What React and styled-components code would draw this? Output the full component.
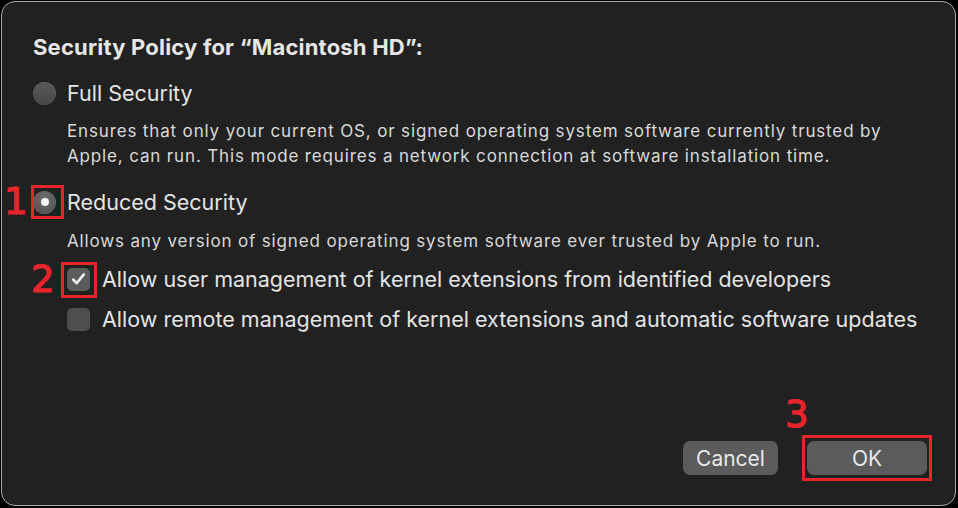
import styled, { createGlobalStyle } from "styled-components";

const Global = createGlobalStyle`
  html, body {
    margin: 0;
    padding: 0;
    background: #000;
  }
  body {
    font-family: "Inter", "Liberation Sans", sans-serif;
    -webkit-font-smoothing: antialiased;
  }
`;

const RED = "#e8242c";

const Dialog = () => {
  return (
    <Window>
      <Title>Security Policy for “Macintosh HD”:</Title>

      <Option $top={18}>
        <Radio />
        <Label>Full Security</Label>
      </Option>
      <Description>
        Ensures that only your current OS, or signed operating system software currently trusted by
        <br />
        Apple, can run. This mode requires a network connection at software installation time.
      </Description>

      <Option $top={20}>
        <Marked>
          <Radio $checked />
          <RadioBox />
          <StepNumber $left={-29} $top={-19}>1</StepNumber>
        </Marked>
        <Label>Reduced Security</Label>
      </Option>
      <Description $top={14}>
        Allows any version of signed operating system software ever trusted by Apple to run.
      </Description>

      <CheckRow $top={12}>
        <Marked>
          <Checkbox $checked>
            <svg width="15" height="14" viewBox="0 0 15 14">
              <path
                d="M2.2 7.6 L5.6 11.2 L12.8 2.4"
                fill="none"
                stroke="#f2f2f2"
                strokeWidth="2.6"
                strokeLinecap="round"
                strokeLinejoin="round"
              />
            </svg>
          </Checkbox>
          <CheckBoxMark />
          <StepNumber $left={-36} $top={-18}>2</StepNumber>
        </Marked>
        <Label>Allow user management of kernel extensions from identified developers</Label>
      </CheckRow>

      <CheckRow $top={14}>
        <Checkbox />
        <Label>Allow remote management of kernel extensions and automatic software updates</Label>
      </CheckRow>

      <Footer>
        <Button>Cancel</Button>
        <Marked>
          <Button $wide>OK</Button>
          <ButtonBox />
          <StepNumber $left={-22} $top={-56}>3</StepNumber>
        </Marked>
      </Footer>
    </Window>
  );
};

const App = () => (
  <>
    <Global />
    <Dialog />
  </>
);

const Window = styled.div`
  box-sizing: border-box;
  margin: 1px 0 0 1px;
  width: 955px;
  height: 505px;
  border: 1px solid #a9a9a9;
  border-radius: 14px;
  background: #212121;
  padding: 30px 30px 0 31px;
  display: flex;
  flex-direction: column;
  color: #e4e4e4;
`;

const Title = styled.div`
  font-size: 22px;
  font-weight: 700;
  letter-spacing: 0.2px;
  line-height: 30px;
  color: #e6e6e6;
  white-space: nowrap;
`;

const Option = styled.div`
  display: flex;
  align-items: center;
  gap: 11px;
  margin-top: ${(p) => p.$top}px;
  height: 26px;
`;

const CheckRow = styled.div`
  display: flex;
  align-items: center;
  gap: 12px;
  margin-top: ${(p) => p.$top}px;
  margin-left: 34px;
  height: 26px;
`;

const Label = styled.span`
  font-size: 21.5px;
  line-height: 26px;
  color: #e4e4e4;
  white-space: nowrap;
`;

const Description = styled.div`
  margin: ${(p) => p.$top ?? 13}px 0 0 34px;
  font-size: 17px;
  letter-spacing: 0.85px;
  line-height: 25px;
  color: #d9d9d9;
  white-space: nowrap;
`;

const Marked = styled.div`
  position: relative;
  display: flex;
`;

const Radio = styled.div`
  position: relative;
  width: 23px;
  height: 23px;
  border-radius: 50%;
  background: ${(p) =>
    p.$checked
      ? "radial-gradient(circle at 50% 35%, #6e6e6e, #4c4c4c)"
      : "linear-gradient(#5a5a5a, #474747)"};
  box-shadow: inset 0 0 0 0.5px rgba(255, 255, 255, 0.08);

  &::after {
    content: "";
    display: ${(p) => (p.$checked ? "block" : "none")};
    position: absolute;
    left: 7.5px;
    top: 7.5px;
    width: 8px;
    height: 8px;
    border-radius: 50%;
    background: #f4f4f4;
  }
`;

const Checkbox = styled.div`
  width: 23px;
  height: 23px;
  border-radius: 5px;
  background: ${(p) => (p.$checked ? "#5c5c5c" : "#4e4e4e")};
  display: flex;
  align-items: center;
  justify-content: center;
`;

const RedBox = styled.div`
  position: absolute;
  box-sizing: border-box;
  border: 3px solid ${RED};
`;

const RadioBox = styled(RedBox)`
  left: -2px;
  top: -6px;
  width: 33px;
  height: 34px;
`;

const CheckBoxMark = styled(RedBox)`
  left: -6px;
  top: -6px;
  width: 36px;
  height: 36px;
`;

const ButtonBox = styled(RedBox)`
  left: -5px;
  top: -6px;
  width: 130px;
  height: 46px;
`;

const StepNumber = styled.span`
  position: absolute;
  left: ${(p) => p.$left}px;
  top: ${(p) => p.$top}px;
  font-family: "DejaVu Sans", sans-serif;
  font-size: 37px;
  line-height: 60px;
  color: ${RED};
  -webkit-text-stroke: 1.2px ${RED};
`;

const Footer = styled.div`
  margin-top: auto;
  margin-bottom: 30px;
  margin-right: -2px;
  display: flex;
  justify-content: flex-end;
  gap: 29px;
`;

const Button = styled.button`
  width: ${(p) => (p.$wide ? 120 : 95)}px;
  height: 34px;
  border: none;
  border-radius: 7px;
  background: #5b5b5b;
  color: #e8e8e8;
  font-family: "Inter", "Liberation Sans", sans-serif;
  font-size: 21px;
  padding: 0;
`;

export default App;
